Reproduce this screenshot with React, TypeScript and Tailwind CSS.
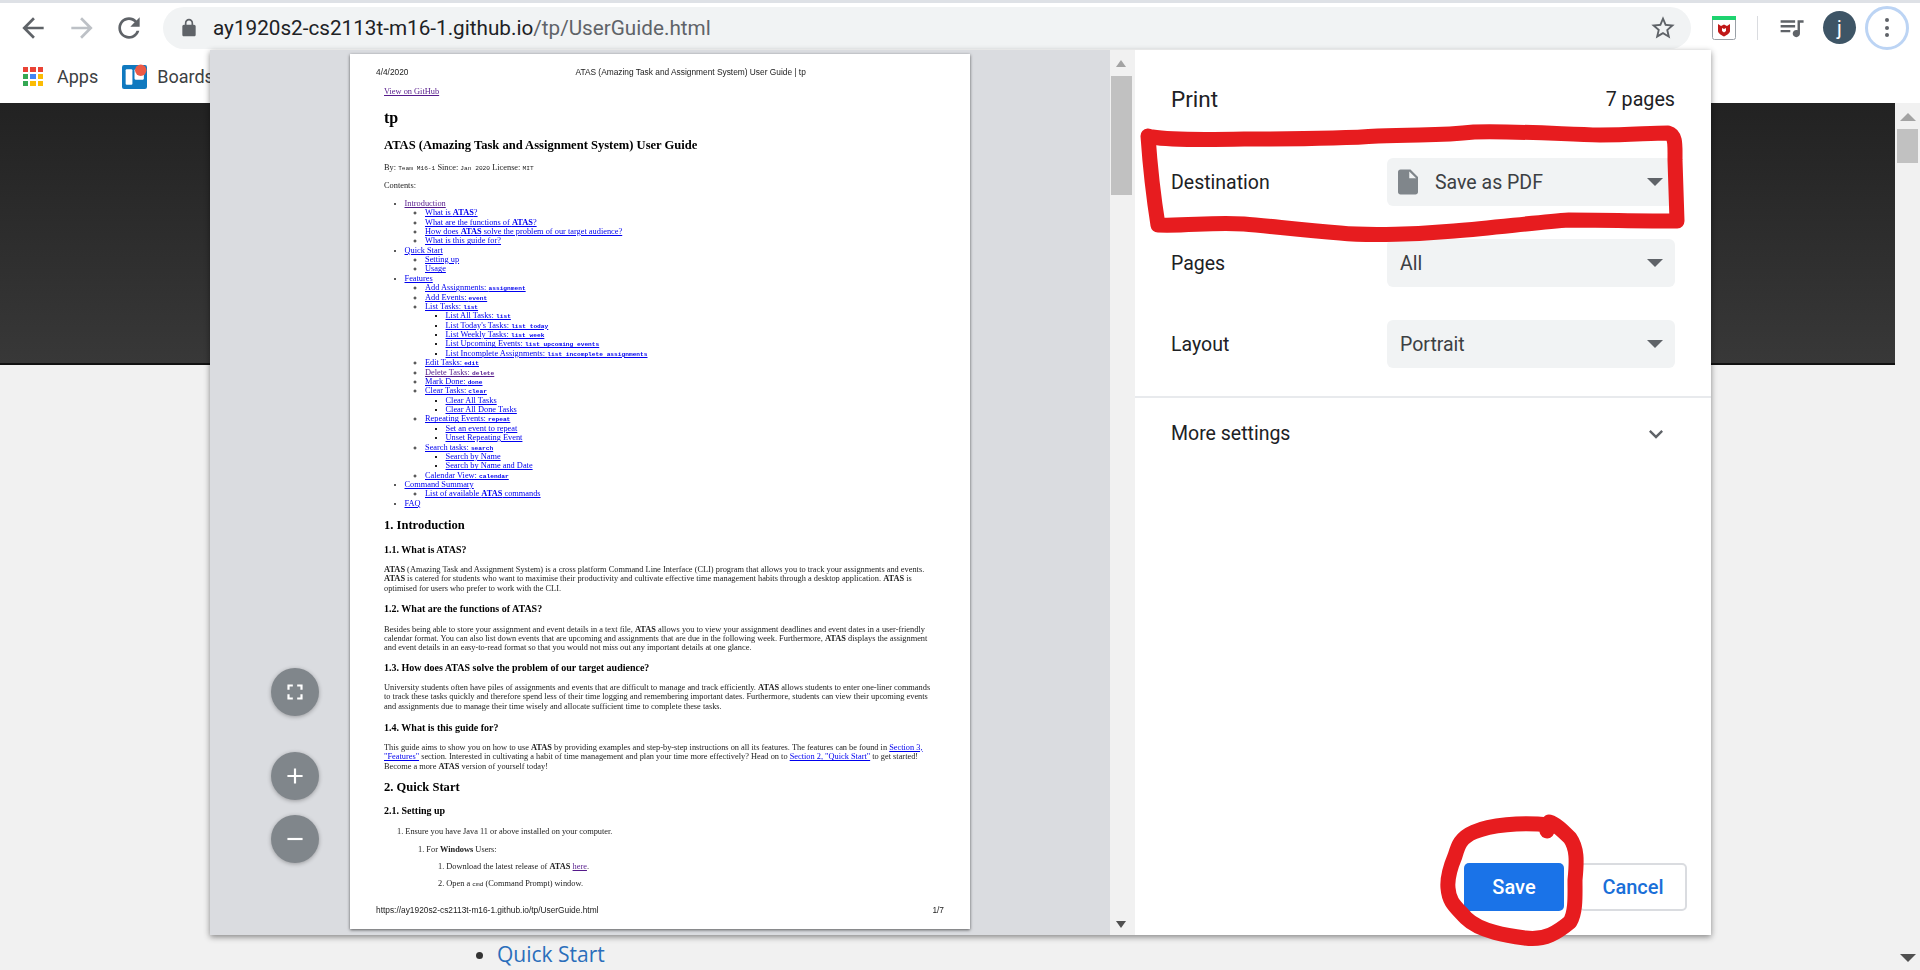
const ICON = {
  back: 'M20 11H7.83l5.59-5.59L12 4l-8 8 8 8 1.41-1.41L7.83 13H20v-2z',
  forward: 'M12 4l-1.41 1.41L16.17 11H4v2h12.17l-5.58 5.59L12 20l8-8z',
  reload:
    'M17.65 6.35C16.2 4.9 14.21 4 12 4c-4.42 0-7.99 3.58-7.99 8s3.57 8 7.99 8c3.73 0 6.84-2.55 7.73-6h-2.08c-.82 2.33-3.04 4-5.65 4-3.31 0-6-2.69-6-6s2.69-6 6-6c1.66 0 3.14.69 4.22 1.78L13 11h7V4l-2.35 2.35z',
  lock: 'M18 8h-1V6c0-2.76-2.24-5-5-5S7 3.24 7 6v2H6c-1.1 0-2 .9-2 2v10c0 1.1.9 2 2 2h12c1.1 0 2-.9 2-2V10c0-1.1-.9-2-2-2zM9 6c0-1.66 1.34-3 3-3s3 1.34 3 3v2H9V6z',
  star: 'M22 9.24l-7.19-.62L12 2 9.19 8.63 2 9.24l5.46 4.73L5.82 21 12 17.27 18.18 21l-1.63-7.03L22 9.24zM12 15.4l-3.76 2.27 1-4.28-3.32-2.88 4.38-.38L12 6.1l1.71 4.04 4.38.38-3.32 2.88 1 4.28L12 15.4z',
  queue:
    'M15 6H3v2h12V6zm0 4H3v2h12v-2zM3 16h8v-2H3v2zM17 6v8.18c-.31-.11-.65-.18-1-.18-1.66 0-3 1.34-3 3s1.34 3 3 3 3-1.34 3-3V8h3V6h-5z',
  doc: 'M14 2H6c-1.1 0-2 .9-2 2v16c0 1.1.9 2 2 2h12c1.1 0 2-.9 2-2V8l-6-6zm-1 7V3.5L18.5 9H13z',
  chevron: 'M7.41 8.59L12 13.17l4.59-4.58L18 10l-6 6-6-6z',
  fit: 'M7 14H5v5h5v-2H7v-3zm-2-4h2V7h3V5H5v5zm12 7h-3v2h5v-5h-2v3zM14 5v2h3v3h2V5h-5z',
  plus: 'M19 13h-6v6h-2v-6H5v-2h6V5h2v6h6v2z',
  minus: 'M19 13H5v-2h14v2z',
};

function Icon({ d, className }: { d: string; className: string }) {
  return (
    <svg viewBox="0 0 24 24" fill="currentColor" className={className}>
      <path d={d} />
    </svg>
  );
}

function Toolbar() {
  return (
    <div className="flex h-[49px] items-center bg-white">
      <Icon d={ICON.back} className="ml-[17px] h-[32px] w-[32px] text-[#5f6368]" />
      <Icon d={ICON.forward} className="ml-[17px] h-[32px] w-[32px] text-[#bdc1c6]" />
      <Icon d={ICON.reload} className="ml-[15px] h-[32px] w-[32px] text-[#5f6368]" />
      <div className="ml-[18px] flex h-[42px] w-[1528px] items-center rounded-full bg-[#f1f3f4] pl-[16px] pr-[14px]">
        <Icon d={ICON.lock} className="h-[20px] w-[20px] text-[#5f6368]" />
        <span className="ml-[14px] pt-[2px] text-[20.7px] text-[#202124]">
          ay1920s2-cs2113t-m16-1.github.io<span className="text-[#5f6368]">/tp/UserGuide.html</span>
        </span>
        <Icon d={ICON.star} className="ml-auto h-[28px] w-[28px] text-[#5f6368]" />
      </div>
      <svg viewBox="0 0 24 24" className="ml-[21px] h-[24px] w-[24px]">
        <rect x="0.5" y="0.5" width="23" height="23" rx="2" fill="#fff" stroke="#9aa0a6" />
        <rect x="0" y="0" width="24" height="4" fill="#1ed36f" />
        <path d="M6 8l3 2 3-1.5L15 10l3-2v7c0 2-3 4-6 5.5C9 19 6 17 6 15z" fill="#c01818" />
        <path d="M10 12l2 1 2-1v3l-2 1.5L10 15z" fill="#fff" />
      </svg>
      <div className="ml-[21px] h-[24px] w-px bg-[#dadce0]" />
      <Icon d={ICON.queue} className="ml-[19px] h-[29px] w-[29px] text-[#5f6368]" />
      <div className="ml-[17px] flex h-[33px] w-[33px] items-center justify-center rounded-full bg-[#3e5566] font-['Roboto',sans-serif] text-[20px] text-white">
        j
      </div>
      <div className="ml-[9px] flex h-[44px] w-[44px] flex-col items-center justify-center gap-[3.5px] rounded-full border-[3px] border-[#bcd4f4]">
        <div className="h-[4px] w-[4px] rounded-full bg-[#5f6368]" />
        <div className="h-[4px] w-[4px] rounded-full bg-[#5f6368]" />
        <div className="h-[4px] w-[4px] rounded-full bg-[#5f6368]" />
      </div>
    </div>
  );
}

function Bookmarks() {
  const dots = ['#ea4335', '#ea4335', '#ea4335', '#34a853', '#4285f4', '#fbbc05', '#34a853', '#fbbc05', '#fbbc05'];
  return (
    <div className="flex h-[51px] items-center bg-white pb-[2px] pl-[23px] text-[18px] text-[#3c4043]">
      <div className="grid h-[19px] w-[20px] grid-cols-3 gap-[2px]">
        {dots.map((c, i) => (
          <div key={i} style={{ backgroundColor: c }} />
        ))}
      </div>
      <span className="ml-[14px]">Apps</span>
      <svg viewBox="0 0 24 24" className="ml-[24px] h-[25px] w-[25px]">
        <rect x="0" y="1" width="24" height="23" rx="2" fill="#0f79bf" />
        <rect x="3.5" y="5" width="6.5" height="15" rx="1" fill="#fff" />
        <rect x="12" y="5" width="9" height="10" rx="1" fill="#fff" />
        <circle cx="18" cy="6" r="5.5" fill="#eb5a46" />
      </svg>
      <span className="ml-[10px]">Boards</span>
    </div>
  );
}

function BackPage() {
  return (
    <div className="flex h-[867px]">
      <div className="flex-1 bg-[#f1f1f1]">
        <div className="h-[262px] border-b-2 border-[#111111] bg-gradient-to-b from-[#222222] to-[#383838]" />
        <ul className="mt-[574px] list-disc pl-[497px] font-['Open_Sans',sans-serif] text-[21px] leading-[30px] text-[#2a6ebb]">
          <li className="marker:text-[#333333]">Quick Start</li>
        </ul>
      </div>
      <div className="flex w-[25px] flex-col items-center bg-[#f1f1f1]">
        <div className="mt-[10px] h-0 w-0 border-x-[8px] border-b-[8px] border-x-transparent border-b-[#a3a3a3]" />
        <div className="mt-[8px] h-[34px] w-[21px] bg-[#c1c1c1]" />
        <div className="mt-auto mb-[8px] h-0 w-0 border-x-[8px] border-t-[8px] border-x-transparent border-t-[#505050]" />
      </div>
    </div>
  );
}

type Item = { t: React.ReactNode; visited?: boolean; kids?: Item[] };

const mono = "font-['Liberation_Mono',monospace] text-[6.2px] leading-[0]";
const code = (s: string) => <code className={`${mono} font-bold`}>{s}</code>;
const atas = <b>ATAS</b>;

const toc: Item[] = [
  {
    t: 'Introduction',
    visited: true,
    kids: [
      { t: <>What is {atas}?</> },
      { t: <>What are the functions of {atas}?</> },
      { t: <>How does {atas} solve the problem of our target audience?</> },
      { t: 'What is this guide for?' },
    ],
  },
  { t: 'Quick Start', kids: [{ t: 'Setting up' }, { t: 'Usage' }] },
  {
    t: 'Features',
    kids: [
      { t: <>Add Assignments: {code('assignment')}</> },
      { t: <>Add Events: {code('event')}</> },
      {
        t: <>List Tasks: {code('list')}</>,
        kids: [
          { t: <>List All Tasks: {code('list')}</> },
          { t: <>List Today's Tasks: {code('list today')}</> },
          { t: <>List Weekly Tasks: {code('list week')}</> },
          { t: <>List Upcoming Events: {code('list upcoming events')}</> },
          { t: <>List Incomplete Assignments: {code('list incomplete assignments')}</> },
        ],
      },
      { t: <>Edit Tasks: {code('edit')}</> },
      { t: <>Delete Tasks: {code('delete')}</>, visited: true },
      { t: <>Mark Done: {code('done')}</> },
      { t: <>Clear Tasks: {code('clear')}</>, kids: [{ t: 'Clear All Tasks' }, { t: 'Clear All Done Tasks' }] },
      {
        t: <>Repeating Events: {code('repeat')}</>,
        kids: [{ t: 'Set an event to repeat' }, { t: 'Unset Repeating Event' }],
      },
      {
        t: <>Search tasks: {code('search')}</>,
        kids: [{ t: 'Search by Name' }, { t: 'Search by Name and Date' }],
      },
      { t: <>Calendar View: {code('calendar')}</> },
    ],
  },
  { t: 'Command Summary', kids: [{ t: <>List of available {atas} commands</> }] },
  { t: 'FAQ' },
];

function Toc({ items, level }: { items: Item[]; level: number }) {
  const cls = level === 0 ? 'list-disc' : level === 1 ? 'list-[circle]' : 'list-[square]';
  return (
    <ul className={`${cls} pl-[20.5px] leading-[9.375px]`}>
      {items.map((item, i) => (
        <li key={i}>
          <a className={`underline ${item.visited ? 'text-[#551a8b]' : 'text-[#0000ee]'}`}>{item.t}</a>
          {item.kids && <Toc items={item.kids} level={level + 1} />}
        </li>
      ))}
    </ul>
  );
}

function PrintedPage() {
  const link = 'text-[#0000ee] underline';
  const h2 = 'text-[12.55px] leading-[14px] font-bold text-black';
  const h3 = 'text-[10px] leading-[11px] font-bold text-black';
  return (
    <div className="h-[875px] w-[620px] overflow-hidden bg-white shadow-[0_1px_3px_rgba(0,0,0,0.6)]">
      <div className="h-full pt-[14px] font-['Liberation_Serif',serif] text-[8.35px] leading-[9.45px] text-[#222222] blur-[0.3px]">
        <div className="flex px-[26px] font-['Liberation_Sans',sans-serif] text-[8.35px]">
          <span>4/4/2020</span>
          <span className="ml-[167px]">ATAS (Amazing Task and Assignment System) User Guide | tp</span>
        </div>
        <div className="pr-[30px] pl-[34px] whitespace-nowrap">
          <a className="mt-[10px] block text-[#551a8b] underline">View on GitHub</a>
          <h1 className="mt-[12px] text-[16px] leading-[18px] font-bold text-black">tp</h1>
          <h2 className={`mt-[11px] ${h2}`}>ATAS (Amazing Task and Assignment System) User Guide</h2>
          <p className="mt-[11px]">
            By: <code className={mono}>Team M16-1</code> Since: <code className={mono}>Jan 2020</code> License:{' '}
            <code className={mono}>MIT</code>
          </p>
          <p className="mt-[8.5px]">Contents:</p>
          <div className="mt-[8.5px]">
            <Toc items={toc} level={0} />
          </div>

          <h2 className={`mt-[10px] ${h2}`}>1. Introduction</h2>
          <h3 className={`mt-[11.5px] ${h3}`}>1.1. What is ATAS?</h3>
          <p className="mt-[10px]">
            {atas} (Amazing Task and Assignment System) is a cross platform Command Line Interface (CLI) program that allows you to track your assignments and events.
            <br />
            {atas} is catered for students who want to maximise their productivity and cultivate effective time management habits through a desktop application. {atas} is
            <br />
            optimised for users who prefer to work with the CLI.
          </p>
          <h3 className={`mt-[10px] ${h3}`}>1.2. What are the functions of ATAS?</h3>
          <p className="mt-[10.5px]">
            Besides being able to store your assignment and event details in a text file, {atas} allows you to view your assignment deadlines and event dates in a user-friendly
            <br />
            calendar format. You can also list down events that are upcoming and assignments that are due in the following week. Furthermore, {atas} displays the assignment
            <br />
            and event details in an easy-to-read format so that you would not miss out any important details at one glance.
          </p>
          <h3 className={`mt-[9px] ${h3}`}>1.3. How does ATAS solve the problem of our target audience?</h3>
          <p className="mt-[10px]">
            University students often have piles of assignments and events that are difficult to manage and track efficiently. {atas} allows students to enter one-liner commands
            <br />
            to track these tasks quickly and therefore spend less of their time logging and remembering important dates. Furthermore, students can view their upcoming events
            <br />
            and assignments due to manage their time wisely and allocate sufficient time to complete these tasks.
          </p>
          <h3 className={`mt-[10.5px] ${h3}`}>1.4. What is this guide for?</h3>
          <p className="mt-[10px]">
            This guide aims to show you on how to use {atas} by providing examples and step-by-step instructions on all its features. The features can be found in <a className={link}>Section 3,</a>
            <br />
            <a className={link}>"Features"</a> section. Interested in cultivating a habit of time management and plan your time more effectively? Head on to <a className={link}>Section 2, "Quick Start"</a> to get started!
            <br />
            Become a more {atas} version of yourself today!
          </p>
          <h2 className={`mt-[9px] ${h2}`}>2. Quick Start</h2>
          <h3 className={`mt-[10.5px] ${h3}`}>2.1. Setting up</h3>
          <p className="mt-[11px] pl-[13px]">1. Ensure you have Java 11 or above installed on your computer.</p>
          <p className="mt-[8.5px] pl-[34px]">
            1. For <b>Windows</b> Users:
          </p>
          <p className="mt-[7.5px] pl-[54px]">
            1. Download the latest release of {atas} <a className="text-[#551a8b] underline">here</a>.
          </p>
          <p className="mt-[8.5px] pl-[54px]">
            2. Open a <code className={mono}>cmd</code> (Command Prompt) window.
          </p>
        </div>
        <div className="mt-[17.5px] flex justify-between px-[26px] font-['Liberation_Sans',sans-serif] text-[8.35px]">
          <span>https://ay1920s2-cs2113t-m16-1.github.io/tp/UserGuide.html</span>
          <span>1/7</span>
        </div>
      </div>
    </div>
  );
}

function RoundButton({ d, className }: { d: string; className?: string }) {
  return (
    <div className={`flex h-[48px] w-[48px] items-center justify-center rounded-full bg-[#80868b] text-white shadow-[0_1px_4px_rgba(0,0,0,0.3)] ${className ?? ''}`}>
      <Icon d={d} className="h-[26px] w-[26px]" />
    </div>
  );
}

function Preview() {
  return (
    <div className="relative flex h-full w-[900px] justify-center bg-[#dadce0] pt-[4px]">
      <PrintedPage />
      <div className="absolute top-[618px] left-[61px] flex flex-col">
        <RoundButton d={ICON.fit} />
        <RoundButton d={ICON.plus} className="mt-[36px]" />
        <RoundButton d={ICON.minus} className="mt-[15px]" />
      </div>
    </div>
  );
}

function PreviewScrollbar() {
  return (
    <div className="flex h-full w-[25px] flex-col items-center bg-[#f1f1f1] pr-[3px]">
      <div className="mt-[10px] h-0 w-0 border-x-[5px] border-b-[7px] border-x-transparent border-b-[#a3a3a3]" />
      <div className="mt-[9px] h-[119px] w-[21px] bg-[#c1c1c1]" />
      <div className="mt-auto mb-[7px] h-0 w-0 border-x-[5px] border-t-[7px] border-x-transparent border-t-[#505050]" />
    </div>
  );
}

function Setting({ label, value, icon }: { label: string; value: string; icon?: boolean }) {
  return (
    <div className="flex h-[48px] items-center justify-between pr-[36px] pl-[36px]">
      <span className="pt-[2px] text-[19.5px] text-[#202124]">{label}</span>
      <div className="flex h-[48px] w-[288px] items-center rounded-[6px] bg-[#f1f3f4] pr-[12px] pl-[13px] text-[19.5px] text-[#3c4043]">
        {icon && <Icon d={ICON.doc} className="mr-[12px] ml-[-7px] h-[30px] w-[30px] text-[#80868b]" />}
        <span className="pt-[1px]">{value}</span>
        <div className="ml-auto h-0 w-0 border-x-[8px] border-t-[8px] border-x-transparent border-t-[#5f6368]" />
      </div>
    </div>
  );
}

function Sidebar() {
  return (
    <div className="flex h-full flex-1 flex-col bg-white">
      <div className="flex h-[108px] items-start justify-between px-[36px] pt-[34px] text-[#202124]">
        <span className="text-[22.5px] leading-[30px]">Print</span>
        <span className="pt-[1px] text-[19.7px] leading-[30px]">7 pages</span>
      </div>
      <div className="flex flex-col gap-[33px]">
        <Setting label="Destination" value="Save as PDF" icon />
        <Setting label="Pages" value="All" />
        <Setting label="Layout" value="Portrait" />
      </div>
      <div className="mt-[28px] h-[2px] bg-[#e8eaed]" />
      <div className="flex h-[72px] items-center justify-between pr-[41px] pl-[36px] text-[19.5px] text-[#202124]">
        <span>More settings</span>
        <Icon d={ICON.chevron} className="h-[28px] w-[28px] text-[#5f6368]" />
      </div>
      <div className="mt-auto mb-[24px] flex justify-end gap-[15px] pr-[24px] text-[20px] font-medium">
        <button className="h-[48px] w-[100px] rounded-[5px] bg-[#1a73e8] text-white">Save</button>
        <button className="h-[48px] w-[108px] rounded-[5px] border-2 border-[#dadce0] bg-white text-[#1a6fd8]">Cancel</button>
      </div>
    </div>
  );
}

export default function App() {
  return (
    <div className="relative h-[970px] w-[1920px] overflow-hidden bg-[#f1f1f1] font-['Roboto',sans-serif]">
      <div className="h-[3px] bg-[#dee1e6]" />
      <Toolbar />
      <Bookmarks />
      <BackPage />

      {/* print dialog */}
      <div className="absolute top-[50px] left-[210px] flex h-[885px] w-[1501px] shadow-[0_2px_6px_rgba(0,0,0,0.45)]">
        <Preview />
        <PreviewScrollbar />
        <Sidebar />
      </div>

      {/* red marker annotations */}
      <svg viewBox="0 0 1920 970" className="pointer-events-none absolute inset-0 h-[970px] w-[1920px]" fill="none" stroke="#e71c1f" strokeWidth="15" strokeLinecap="round" strokeLinejoin="round">
        <path d="M1152 137 C1170 140 1200 140 1244 139 C1300 139 1350 138 1378 136 C1420 134 1440 136 1474 132 C1520 131 1560 134 1600 135 C1630 135 1650 133 1668 133 C1676 135 1675 145 1675 160 L1677 221 C1640 221 1600 220 1569 220 C1540 222 1500 227 1454 231 C1420 234 1370 236 1340 233 C1300 230 1270 226 1244 224 C1210 222 1190 226 1158 225 C1154 200 1150 165 1148 136" />
        <path d="M1547 831 L1549 825 C1520 822 1490 825 1474 832 C1460 838 1458 846 1455 856 C1450 868 1447 878 1448 888 C1449 902 1455 906 1466 918 C1480 932 1510 936 1525 938 C1545 941 1558 932 1570 922 C1576 912 1575 895 1575 880 C1577 860 1577 848 1570 838 C1562 830 1556 824 1549 822" />
      </svg>
    </div>
  );
}
